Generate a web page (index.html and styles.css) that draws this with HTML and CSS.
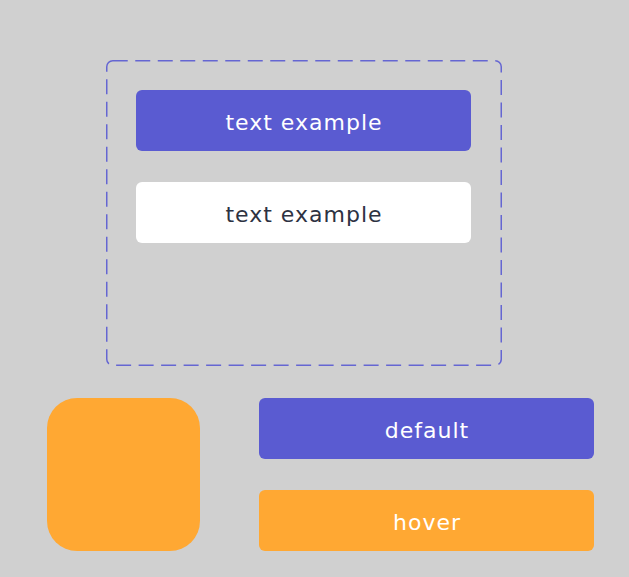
FILE: index.html
```html
<!DOCTYPE html>
<html lang="en">
<head>
    <meta charset="UTF-8">
    <meta name="viewport" content="width=device-width, initial-scale=1.0">
    <title>Buttons</title>
    <link rel="stylesheet" href="styles.css">
</head>
<body>
    <div class="page">
        <div class="variants">
            <svg class="variants-border" width="396" height="306" viewBox="0 0 396 306">
                <rect x="0.75" y="0.75" width="394.5" height="304.5" rx="6" ry="6" />
            </svg>
            <button class="btn btn-primary">text example</button>
            <button class="btn btn-light">text example</button>
        </div>

        <div class="states">
            <div class="swatch"></div>
            <div class="state-list">
                <button class="btn btn-primary">default</button>
                <button class="btn btn-hover">hover</button>
            </div>
        </div>
    </div>
</body>
</html>
```

FILE: styles.css
```css
body {
    margin: 0;
    background: #d0d0d0;
    font-family: 'DejaVu Sans', 'Noto Sans', sans-serif;
    min-height: 100vh;
}

.page {
    padding-top: 60px;
}

.variants {
    position: relative;
    margin-left: 106px;
    width: 396px;
    height: 306px;
    box-sizing: border-box;
    padding: 30px;
    display: flex;
    flex-direction: column;
    gap: 31px;
}

.variants-border {
    position: absolute;
    left: 0;
    top: 0;
    pointer-events: none;
}

.variants-border rect {
    fill: none;
    stroke: #6566d2;
    stroke-width: 1.5;
    stroke-dasharray: 15 7.5;
}

.btn {
    width: 335px;
    height: 61px;
    border: none;
    border-radius: 6px;
    font-family: inherit;
    font-size: 22px;
    font-weight: 400;
    letter-spacing: 1px;
    cursor: pointer;
    padding: 3px 0 0 1px;
}

.btn-primary {
    background: #5a5bd1;
    color: white;
}

.btn-light {
    background: white;
    color: #2d3242;
}

.btn-hover {
    background: #ffa833;
    color: white;
}

.states {
    display: flex;
    margin-top: 32px;
    padding-left: 47px;
    gap: 59px;
}

.swatch {
    width: 153px;
    height: 153px;
    border-radius: 30px;
    background: #ffa833;
}

.state-list {
    display: flex;
    flex-direction: column;
    gap: 31px;
}
```
